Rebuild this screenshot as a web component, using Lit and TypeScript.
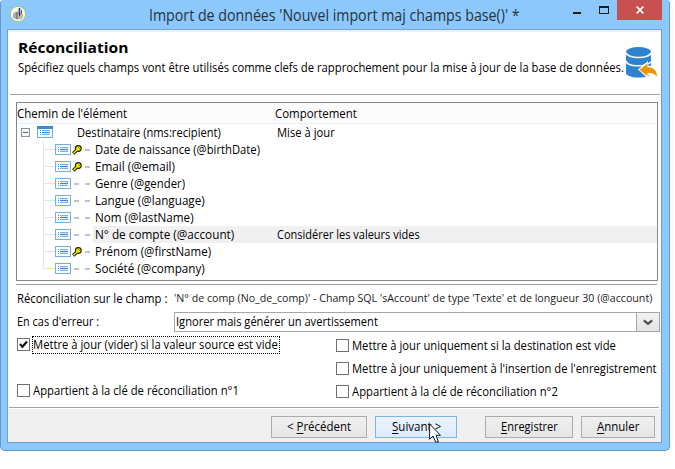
import { LitElement, html, svg, css, nothing } from "lit";
import { customElement, property, query } from "lit/decorators.js";

/** A one-line label whose text is spread over a given width. */
@customElement("fit-text")
class FitText extends LitElement {
  @property({ type: Number }) w = 100;
  @query("span") inner!: HTMLSpanElement;
  static styles = css`
    :host { display: block; white-space: pre; overflow: visible; flex: none; }
    span { display: inline-block; transform-origin: 0 50%; }
  `;
  firstUpdated() {
    const natural = this.inner.offsetWidth;
    if (natural > 0) this.inner.style.transform = `scaleX(${this.w / natural})`;
  }
  render() {
    return html`<style>:host { width: ${this.w}px; }</style><span><slot></slot></span>`;
  }
}

interface Field { label: string; width: number; key?: boolean; behavior?: string; selected?: boolean; }

const fields: Field[] = [
  { label: "Date de naissance (@birthDate)", width: 165, key: true },
  { label: "Email (@email)", width: 80, key: true },
  { label: "Genre (@gender)", width: 90 },
  { label: "Langue (@language)", width: 110 },
  { label: "Nom (@lastName)", width: 99 },
  { label: "N° de compte (@account)", width: 139, behavior: "Considérer les valeurs vides", selected: true },
  { label: "Prénom (@firstName)", width: 116, key: true },
  { label: "Société (@company)", width: 110 },
];

const listIcon = (root = false) => svg`
  <svg class="list" width="16" height="13" viewBox="0 0 16 13" shape-rendering="crispEdges">
    <rect x=".5" y="1.5" width="15" height="10" fill="#fff" stroke="#72aee6"/>
    ${root ? svg`<rect x="0" y="0" width="16" height="3" fill="#3a8ad6"/>` : nothing}
    <path d="M3 4.5h1M3 6.5h1M3 8.5h1" stroke="#3a8ad6"/>
    <path d="M5 4.5h8M5 8.5h8" stroke="#78b2ea"/><path d="M5 6.5h8" stroke="#3a8ad6"/>
    <path d="M5 5.5h8M5 7.5h8" stroke="#d6e8f9"/>
  </svg>`;

const keyIcon = svg`
  <svg width="10" height="10" viewBox="0 0 10 10">
    <path d="M1.2 8.600 5.200 4.800" stroke="#1c1c00" stroke-width="3.400"/>
    <circle cx="6.300" cy="3.500" r="2.900" fill="#f0e400" stroke="#1c1c00" stroke-width="1.100"/>
    <path d="M1.500 8.300 5.600 4.200" stroke="#f0e400" stroke-width="1.500"/>
    <path d="M6.600 2.600l.8 .8" stroke="#1c1c00"/>
  </svg>`;

@customElement("app-root")
class AppRoot extends LitElement {
  static styles = css`
    :host {
      display: block; position: relative; width: 675px; height: 469px; overflow: hidden;
      background: #fff; color: #000; font: 12px/17px "Open Sans", "Noto Sans", sans-serif;
    }
    * { box-sizing: border-box; }
    svg { display: block; flex: none; }
    .window {
      width: 670px; height: 451px; background: #8cc8fb; border: 1px solid #6498c8; border-top: 0;
      border-radius: 4px 4px 5px 5px; padding: 0 7px 7px 6px; display: flex; flex-direction: column;
      box-shadow: 2px 0 5px #0000000a;
    }
    .titlebar { height: 29px; display: flex; flex: none; align-items: flex-start; }
    .logo { margin: 5px 0 0 2px; }
    .title { margin: 3px 0 0 122px; font-size: 16px; line-height: 24px; color: #263442; }
    .controls { display: flex; margin-left: auto; }
    .close { width: 45px; height: 20px; background: #c75050; display: grid; place-items: center; }
    .client {
      flex: 1; border: 1px solid #6c9fce; background: #fff; display: flex; flex-direction: column;
      border-top-color: #6fa5d8;
    }
    .head { height: 64px; padding: 6px 4px 0 10px; display: flex; border-top: 2px solid #f0f0f0; }
    .words { width: 608px; flex: none; }
    .heading { font-size: 15px; font-weight: 700; line-height: 20px; margin-top: -1px; }
    .desc { margin-top: 2px; }
    .db { margin-top: 9px; }
    .rule { height: 1px; background: #a0a0a0; flex: none; }
    .r1 { margin: 0 1px 0 2px; }
    .tree { margin: 7px 4px 0 8px; width: 642px; height: 179px; border: 1px solid #828790; flex: none; }
    .cols { display: grid; grid-template-columns: 257px 1fr; height: 21px; border-bottom: 1px solid #e5f0fb; background: #fcfcfc; line-height: 21px; }
    .cols > * + * { border-left: 1px solid #e5f0fb; }
    .row { height: 17px; display: grid; grid-template-columns: 257px 1fr; line-height: 17px; }
    .cell { display: flex; align-items: center; }
    .behav { padding-left: 3px; }
    .child .cell { padding-left: 26px; }
    .stub { width: 12px; height: 17px; border-left: 1px solid #e4e4e4; display: flex; align-items: center; }
    .stub::after { content: ""; width: 11px; height: 1px; background: #e4e4e4; }
    .last .stub { align-items: flex-start; height: 17px; border-image: linear-gradient(#e4e4e4 9px, transparent 9px) 1; }
    .last .stub::after { margin-top: 8px; }
    .marks { width: 22px; display: flex; align-items: center; justify-content: space-between; padding: 0 3px 0 1px; }
    .dash { width: 5px; height: 2px; background: #c2c2c2; }
    .dash:first-child { margin-left: 2px; }
    .name { flex: 1; padding-left: 2px; height: 17px; }
    .selected .name, .selected .behav { background: #f0f0f0; }
    .toggle { margin: 0 7px 0 4px; }
    .rootname { margin-left: 24px; }
    .r2 { margin: 3px 4px 0 8px; }
    .form { padding: 0 2px 0 9px; height: 50px; display: grid; grid-template-columns: 157px 1fr; grid-template-rows: 27px 20px; }
    .form .lbl { padding-top: 5px; }
    .form .val { padding-top: 4px; font-size: 11px; color: #1c1c1c; }
    .form .lbl2 { padding-top: 1px; }
    .combo { width: 486px; height: 20px; border: 1px solid #a5a5ab; display: flex; justify-content: space-between; line-height: 18px; padding-left: 1px; }
    .drop { width: 23px; border-left: 1px solid #a5a5ab; background: linear-gradient(#f2f2f2, #e3e3e3); display: grid; place-items: center; }
    .checks { flex: none; height: 72px; padding-left: 9px; display: grid; grid-template-columns: 319px 1fr; grid-template-rows: 23px 23px 23px; }
    .check { display: flex; align-items: flex-start; padding-top: 4px; }
    .check.up { padding-top: 3px; }
    .box { width: 13px; height: 13px; border: 1px solid #707070; background: #fff; flex: none; }
    .text { margin: -2px 0 0 2px; padding-left: 1px; line-height: 17px; height: 17px; }
    .focus { outline: 1px dotted #000; outline-offset: -1px; height: 18px; width: 248px; }
    .r3 { margin: 0 2px 0 1px; }
    .footer { flex: 1; border-top: 1px solid #fff; background: #f0f0f0; display: flex; padding: 7px 6px 0 0; justify-content: flex-end; gap: 8px; align-items: flex-start; }
    button {
      font: inherit; color: inherit; height: 22px; padding: 0; border: 1px solid #acacac; border-radius: 0;
      background: linear-gradient(#f0f0f0, #e5e5e5); display: flex; align-items: center; justify-content: center; line-height: 18px;
    }
    .hot { border-color: #7eb4ea; background: linear-gradient(#ecf4fc, #dcecfc); margin-right: 20px; }
    .b1 { width: 96px; } .b2 { width: 82px; } .b3 { width: 88px; } .b4 { width: 74px; }
    u { text-underline-offset: 2px; text-decoration-thickness: 1px; text-decoration-skip-ink: none; }
    .pointer { position: absolute; left: 429px; top: 423px; }
  `;

  check(text: string, w: number, opts: { on?: boolean; up?: boolean } = {}) {
    return html`<div class="check ${opts.up ? "up" : ""}">
      <div class="box">${opts.on
        ? html`<svg width="11" height="11" viewBox="0 0 11 11"><path d="M2 5.1 4.4 7.8 9 2.6" fill="none" stroke="#111" stroke-width="2.2"/></svg>`
        : nothing}</div>
      <div class="text ${opts.on ? "focus" : ""}"><fit-text .w=${w}>${text}</fit-text></div>
    </div>`;
  }

  field(f: Field, last: boolean) {
    return html`<div class="row child ${f.selected ? "selected" : ""} ${last ? "last" : ""}">
      <div class="cell">
        <div class="stub"></div>${listIcon()}
        <div class="marks">${f.key ? keyIcon : html`<i class="dash"></i>`}<i class="dash"></i></div>
        <div class="name"><fit-text .w=${f.width}>${f.label}</fit-text></div>
      </div>
      <div class="behav">${f.behavior ? html`<fit-text .w=${143}>${f.behavior}</fit-text>` : nothing}</div>
    </div>`;
  }

  render() {
    return html`
      <div class="window">
        <div class="titlebar">
          <svg class="logo" width="18" height="18" viewBox="0 0 18 18">
            <circle cx="9" cy="9" r="7.7" fill="#f5f5f5" stroke="#9fc56b" stroke-width="1"/>
            <path d="M4 9 7 6.5V14L4 12.5Z" fill="#aaa"/><path d="M7 6.5 9 7V14.5L7 14Z" fill="#888"/>
            <path d="M10 3.5V12M12.5 5v7" stroke="#555"/><ellipse cx="11" cy="11" rx="2.4" ry="2.8" fill="#d4d4d4" stroke="#777" stroke-width=".7"/>
            <path d="M10.6 3v8.5" stroke="#333" stroke-width="1.2"/>
          </svg>
          <fit-text class="title" .w=${371}>Import de données 'Nouvel import maj champs base()' *</fit-text>
          <div class="controls">
            <svg width="45" height="20" viewBox="0 0 45 20" shape-rendering="crispEdges">
              <path d="M1 12h8v2H1z" fill="#1c1c1c"/>
              <path d="M27 6h10v8H27zM28 8v5h8V8z" fill="#1c1c1c" fill-rule="evenodd"/>
            </svg>
            <div class="close"><svg width="8" height="8" viewBox="0 0 8 8"><path d="M.7 .7 7.3 7.3M7.3 .7 .7 7.3" stroke="#fff" stroke-width="1.7"/></svg></div>
          </div>
        </div>
        <div class="client">
          <div class="head">
            <div class="words">
              <fit-text class="heading" .w=${110}>Réconciliation</fit-text>
              <fit-text class="desc" .w=${606}>Spécifiez quels champs vont être utilisés comme clefs de rapprochement pour la mise à jour de la base de données.</fit-text>
            </div>
            <svg class="db" width="32" height="31" viewBox="0 0 32 31">
              <path d="M0 4.5V26C0 28.500 5.500 30.500 12.500 30.500S25 28.500 25 26V4.500Z" fill="#2d83d0"/>
              <ellipse cx="12.500" cy="4.700" rx="12.500" ry="4.700" fill="#2d83d0"/>
              <path d="M-.2 5.500C1 12.300 24 12.300 25.200 5.500M-.2 14C2 20 18 20.500 25.200 15" fill="none" stroke="#fff" stroke-width="1.500"/>
              <path d="M12 22.500 22 14V18.500C28.500 18.500 31.500 23 31.500 31H24V28H22V31.500Z" fill="#fff"/>
              <path d="M13.500 22.800 21.500 16.500V20.300C27.500 20.300 31 23.500 31 29.700 29 26.800 26 25.700 21.500 25.700V29.300Z" fill="#f39200"/>
            </svg>
          </div>
          <div class="rule r1"></div>
          <div class="tree">
            <div class="cols">
              <fit-text .w=${110}>Chemin de l'élément</fit-text>
              <div><fit-text .w=${82}>Comportement</fit-text></div>
            </div>
            <div class="row">
              <div class="cell">
                <svg class="toggle" width="9" height="9" viewBox="0 0 9 9" shape-rendering="crispEdges">
                  <rect x=".5" y=".5" width="8" height="8" fill="#f6f6f6" stroke="#919191"/><path d="M2 4.500h5" stroke="#4b63a7"/>
                </svg>${listIcon(true)}
                <fit-text class="rootname" .w=${144}>Destinataire (nms:recipient)</fit-text>
              </div>
              <div class="behav"><fit-text .w=${58}>Mise à jour</fit-text></div>
            </div>
            ${fields.map((f, i) => this.field(f, i === fields.length - 1))}
          </div>
          <div class="rule r2"></div>
          <div class="form">
            <fit-text class="lbl" .w=${150}>Réconciliation sur le champ :</fit-text>
            <fit-text class="val" .w=${478}>'N° de comp (No_de_comp)' - Champ SQL 'sAccount' de type 'Texte' et de longueur 30 (@account)</fit-text>
            <fit-text class="lbl2" .w=${82}>En cas d'erreur :</fit-text>
            <div class="combo">
              <fit-text .w=${202}>Ignorer mais générer un avertissement</fit-text>
              <div class="drop"><svg width="10" height="7" viewBox="0 0 10 7"><path d="M.8 1.300 5 4.800 9.200 1.300" fill="none" stroke="#505050" stroke-width="2.300"/></svg></div>
            </div>
          </div>
          <div class="checks">
            ${this.check("Mettre à jour (vider) si la valeur source est vide", 245, { on: true, up: true })}
            ${this.check("Mettre à jour uniquement si la destination est vide", 264)}
            <div></div>
            ${this.check("Mettre à jour uniquement à l'insertion de l'enregistrement", 305)}
            ${this.check("Appartient à la clé de réconciliation n°1", 206, { up: true })}
            ${this.check("Appartient à la clé de réconciliation n°2", 206)}
          </div>
          <div class="rule r3"></div>
          <div class="footer">
            <button class="b1"><fit-text .w=${64}>&lt; <u>P</u>récédent</fit-text></button>
            <button class="b2 hot"><fit-text .w=${49}><u>S</u>uivant &gt;</fit-text></button>
            <button class="b3"><fit-text .w=${57}><u>E</u>nregistrer</fit-text></button>
            <button class="b4"><fit-text .w=${42}><u>A</u>nnuler</fit-text></button>
          </div>
        </div>
      </div>
      <svg class="pointer" width="13" height="20" viewBox="0 0 13 20">
        <path d="M.6 1V16.200L4 13 6.600 19H9.400L7 12.300H11.500Z" fill="#fff" stroke="#111a2a" stroke-width="1"/>
      </svg>`;
  }
}
